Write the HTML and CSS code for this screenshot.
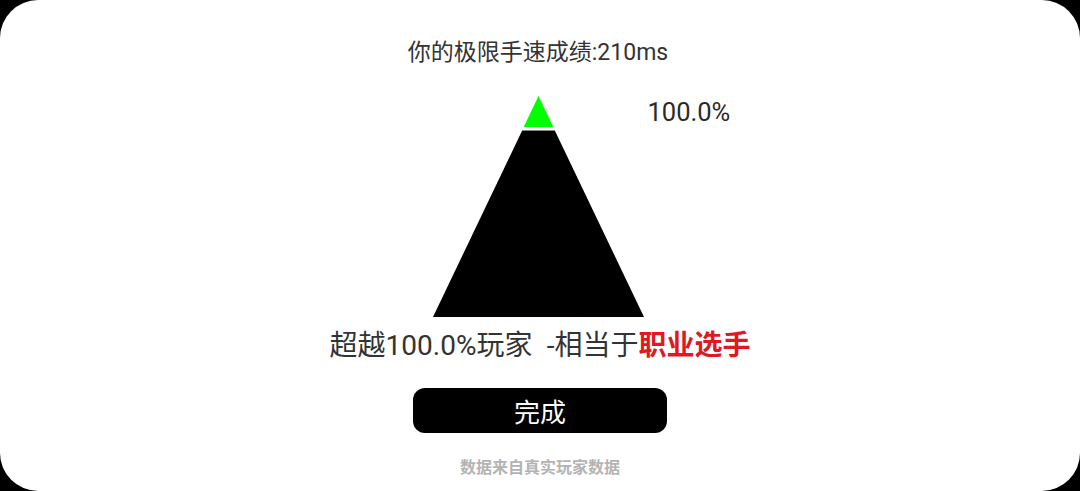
FILE: index.html
```html
<!DOCTYPE html>
<html lang="zh-CN">
<head>
    <meta charset="UTF-8">
    <meta name="viewport" content="width=device-width, initial-scale=1.0">
    <title>手速成绩</title>
    <link rel="stylesheet" href="styles.css">
</head>
<body>
    <div class="card">
        <div class="title">你的极限手速成绩:210ms</div>

        <div class="chart">
            <div class="side"></div>
            <svg class="pyramid" width="211" height="221" viewBox="0 0 211 221">
                <polygon points="105.5,0 120.3,31 90.7,31" fill="#00ff00"/>
                <polygon points="89.2,34.5 121.8,34.5 211,221 0,221" fill="#000"/>
            </svg>
            <div class="side">
                <span class="pct">100.0%</span>
            </div>
        </div>

        <div class="result">超越100.0%玩家&ensp;-相当于<span class="rank">职业选手</span></div>

        <button class="done">完成</button>

        <div class="note">数据来自真实玩家数据</div>
    </div>
</body>
</html>
```

FILE: styles.css
```css
*{
    margin: 0px;
    padding: 0px;
    box-sizing: border-box;
}
body{
    background-color: #000;
    font-family: Roboto, "Noto Sans CJK SC", sans-serif;
    color: #333;
}
.card{
    height: 491px;
    background-color: #fff;
    border-radius: 38px;
    padding-top: 38px;
    display: flex;
    flex-direction: column;
    align-items: center;
}
.title{
    font-size: 23px;
    line-height: 30px;
    margin-left: -4px;
}
.chart{
    margin-top: 28px;
    width: 100%;
    display: grid;
    grid-template-columns: 1fr 211px 1fr;
}
.pyramid{
    display: block;
    margin-left: -2px;
}
.side .pct{
    display: block;
    font-size: 25.5px;
    line-height: 30px;
    margin-top: 1px;
    padding-left: 2px;
    color: #2a2a2a;
}
.result{
    margin-top: 12px;
    font-size: 28px;
    line-height: 34px;
    margin-left: 0px;
}
.rank{
    color: #e0191f;
    font-weight: bold;
}
.done{
    margin-top: 25px;
    width: 254px;
    height: 45px;
    border: none;
    border-radius: 12px;
    background-color: #000;
    color: #fff;
    font-family: Roboto, "Noto Sans CJK SC", sans-serif;
    font-size: 26px;
    cursor: pointer;
}
.note{
    margin-top: 24px;
    font-size: 16px;
    line-height: 22px;
    font-weight: bold;
    color: #b3b3b3;
}
```
